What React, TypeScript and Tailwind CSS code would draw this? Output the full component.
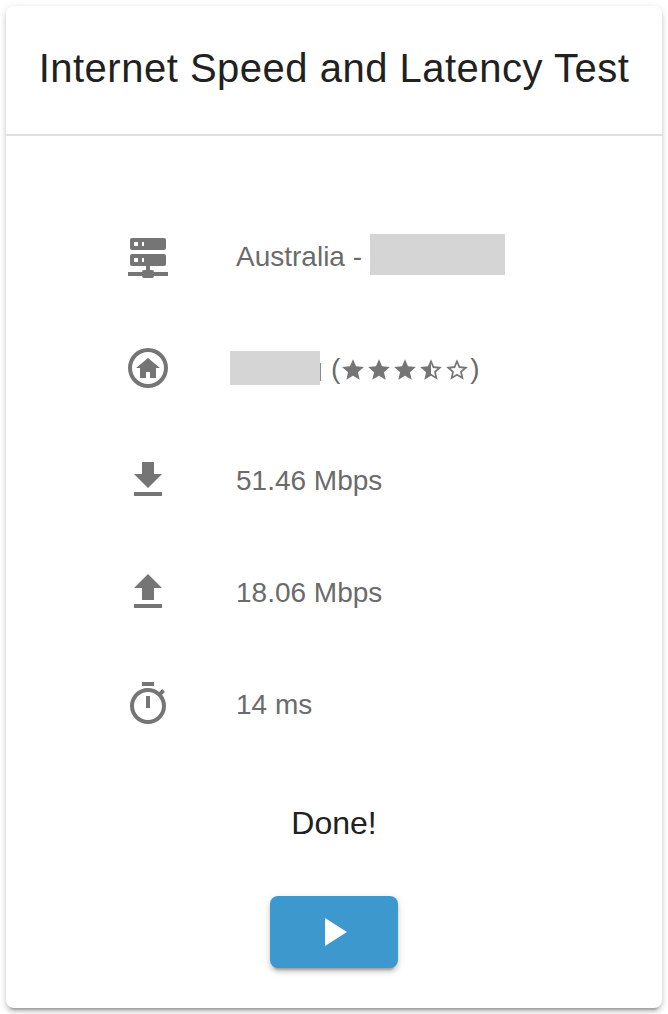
import type { ReactNode } from "react";

const STAR = "M12 17.27L18.18 21l-1.64-7.03L22 9.24l-7.19-.61L12 2 9.19 8.63 2 9.24l5.46 4.73L5.82 21z";
const STAR_HALF =
  "M22 9.24l-7.19-.62L12 2 9.19 8.63 2 9.24l5.46 4.73L5.82 21 12 17.27 18.18 21l-1.63-7.03L22 9.24zM12 15.4V6.1l1.71 4.04 4.38.38-3.32 2.88 1 4.28L12 15.4z";
const STAR_OUTLINE =
  "M22 9.24l-7.19-.62L12 2 9.19 8.63 2 9.24l5.46 4.73L5.82 21 12 17.27 18.18 21l-1.63-7.03L22 9.24zM12 15.4l-3.76 2.27 1-4.28-3.32-2.88 4.38-.38L12 6.1l1.71 4.04 4.38.38-3.32 2.88 1 4.28L12 15.4z";
const SERVER =
  "M13 19H14A1 1 0 0 1 15 20H22V22H15A1 1 0 0 1 14 23H10A1 1 0 0 1 9 22H2V20H9A1 1 0 0 1 10 19H11V17H4A1 1 0 0 1 3 16V12A1 1 0 0 1 4 11H20A1 1 0 0 1 21 12V16A1 1 0 0 1 20 17H13V19M4 3H20A1 1 0 0 1 21 4V8A1 1 0 0 1 20 9H4A1 1 0 0 1 3 8V4A1 1 0 0 1 4 3M9 7H10V5H9V7M9 15H10V13H9V15M5 5V7H7V5H5M5 13V15H7V13H5Z";
const HOME =
  "M12 2A10 10 0 1 0 12 22A10 10 0 1 0 12 2ZM12 4A8 8 0 1 1 12 20A8 8 0 1 1 12 4ZM11 17V14H13V17H16V12H18L12 7L6 12H8V17Z";
const DOWNLOAD = "M5 20H19V18H5M19 9H15V3H9V9H5L12 16L19 9Z";
const UPLOAD = "M9 16V10H5L12 3L19 10H15V16H9M5 20V18H19V20H5Z";
const TIMER =
  "M15 1H9v2h6V1zm-4 13h2V8h-2v6zm8.03-6.61l1.42-1.42c-.43-.51-.9-.99-1.41-1.41l-1.42 1.42C16.07 4.74 14.12 4 12 4c-4.97 0-9 4.03-9 9s4.02 9 9 9 9-4.03 9-9c0-2.12-.74-4.07-1.97-5.61zM12 20c-3.87 0-7-3.13-7-7s3.13-7 7-7 7 3.13 7 7-3.13 7-7 7z";

function Icon({ path, className }: { path: string; className: string }) {
  return (
    <svg viewBox="0 0 24 24" fill="currentColor" fillRule="evenodd" className={className} aria-hidden="true">
      <path d={path} />
    </svg>
  );
}

function Row({ icon, children }: { icon: string; children: ReactNode }) {
  return (
    <li className="flex h-28 items-center">
      <Icon path={icon} className="size-12 shrink-0 text-[#757575]" />
      <div className="ml-16 flex items-center whitespace-pre pt-0.5 text-[28px] leading-10 text-[#6b6b6b]">
        {children}
      </div>
    </li>
  );
}

export default function App() {
  return (
    <div className="h-[1014px] w-[668px] overflow-hidden bg-white p-1.5 font-['Liberation_Sans',Arial,sans-serif]">
      <main className="flex h-[1002px] flex-col rounded-lg bg-white shadow-[0_6px_2px_-4px_rgba(0,0,0,0.2),0_4px_4px_0_rgba(0,0,0,0.14),0_2px_10px_0_rgba(0,0,0,0.12)]">
        <header className="flex h-[130px] items-center justify-center border-b-2 border-[#e0e0e0] pb-1">
          <h1 className="whitespace-nowrap text-[40px] leading-[64px] tracking-[0.5px] text-[#212121]">
            Internet Speed and Latency Test
          </h1>
        </header>
        <ul className="mt-16 pl-[118px]">
          <Row icon={SERVER}>
            Australia -<span className="-mt-1.5 ml-2 h-[41px] w-[135px] bg-[#d5d5d5]" />
          </Row>
          <Row icon={HOME}>
            <span className="-mt-0.5 -ml-[6px] h-[34px] w-[90px] bg-[#d5d5d5]" />
            <span className="mt-1.5 mr-[10px] h-[18px] w-px bg-[#8a8a8a]" />
            (
            <span className="mt-0.5 flex text-[#757575]">
              <Icon path={STAR} className="size-[26px]" />
              <Icon path={STAR} className="size-[26px]" />
              <Icon path={STAR} className="size-[26px]" />
              <Icon path={STAR_HALF} className="size-[26px]" />
              <Icon path={STAR_OUTLINE} className="size-[26px]" />
            </span>
            )
          </Row>
          <Row icon={DOWNLOAD}>51.46 Mbps</Row>
          <Row icon={UPLOAD}>18.06 Mbps</Row>
          <Row icon={TIMER}>14 ms</Row>
        </ul>
        <p className="mt-[39px] text-center text-[32px] leading-[48px] text-[#212121]">Done!</p>
        <button
          type="button"
          aria-label="Start"
          className="mx-auto mt-[49px] flex h-[72px] w-32 items-center justify-center rounded-lg bg-[#3d98ce] pr-0.5 text-white shadow-[0_6px_2px_-4px_rgba(0,0,0,0.2),0_4px_4px_0_rgba(0,0,0,0.14),0_2px_10px_0_rgba(0,0,0,0.12)]"
        >
          <Icon path="M8 5V19L19 12Z" className="size-12" />
        </button>
      </main>
    </div>
  );
}
